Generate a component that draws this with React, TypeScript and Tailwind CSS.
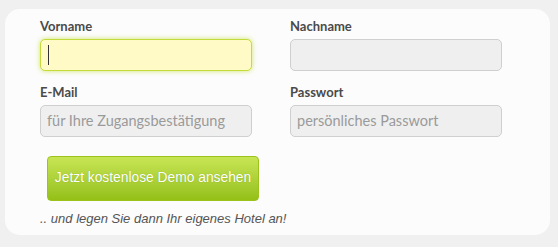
const Field = ({ label, placeholder, active }: { label: string; placeholder?: string; active?: boolean }) => (
  <div className="flex flex-col">
    <label className="h-[15px] text-[13px] leading-[15px] font-bold text-[#4a4a4a]">{label}</label>
    <div
      className={
        active
          ? "mt-[5px] flex h-[32px] items-center rounded-[5px] border border-[#c3dc3c] bg-[#fffac6] px-[7px] shadow-[0_0_5px_rgba(190,220,40,0.7)]"
          : "mt-[5px] flex h-[32px] items-center rounded-[5px] border border-[#cfcfcf] bg-[#efefef] px-[6px] text-[14.5px] text-[#9a9a9a]"
      }
    >
      {active ? <span className="h-[20px] w-[1px] bg-[#333]" /> : placeholder}
    </div>
  </div>
);

export default function App() {
  return (
    <div className="h-[247px] w-[558px] bg-[#f0f0f0] pl-[5px] pt-[9px] font-['Lato',sans-serif]">
      <div className="h-[226px] w-[545px] rounded-[15px] bg-[#fcfcfc] pl-[35px] pt-[10px]">
        <div className="grid w-[462px] grid-cols-[212px_212px] gap-x-[38px] gap-y-[14px]">
          <Field label="Vorname" active />
          <Field label="Nachname" />
          <Field label="E-Mail" placeholder="für Ihre Zugangsbestätigung" />
          <Field label="Passwort" placeholder="persönliches Passwort" />
        </div>
        <button className="mt-[19px] ml-[7px] flex h-[45px] w-[212px] items-center justify-center rounded-[4px] border border-[#9cc31c] bg-gradient-to-b from-[#c8e553] to-[#94c016] font-['Liberation_Sans',sans-serif] text-[13.8px] text-white [text-shadow:0_0_1px_rgba(80,110,0,0.4)]">
          Jetzt kostenlose Demo ansehen
        </button>
        <p className="mt-[8px] font-['Liberation_Sans',sans-serif] text-[13px] italic text-[#555]">
          .. und legen Sie dann Ihr eigenes Hotel an!
        </p>
      </div>
    </div>
  );
}
